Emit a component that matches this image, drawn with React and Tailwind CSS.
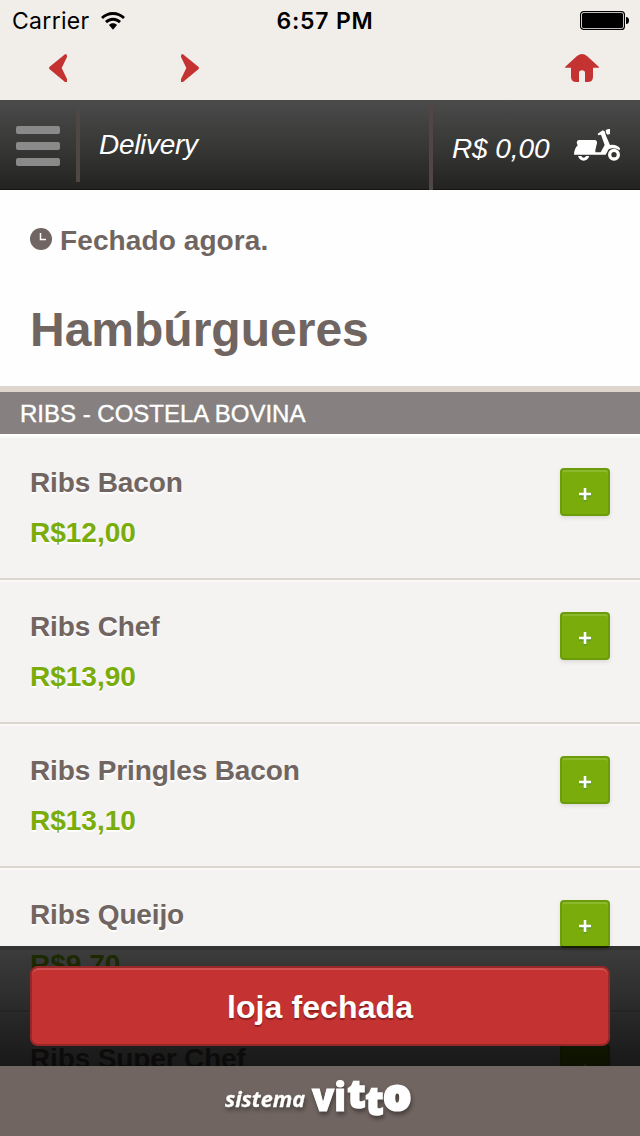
const items = [
  { name: 'Ribs Bacon', price: 'R$12,00' },
  { name: 'Ribs Chef', price: 'R$13,90' },
  { name: 'Ribs Pringles Bacon', price: 'R$13,10' },
  { name: 'Ribs Queijo', price: 'R$9,70' },
  { name: 'Ribs Super Chef', price: 'R$14,50' },
];

function StatusBar() {
  return (
    <div className="grid h-10 grid-cols-3 items-center font-[Inter,sans-serif] text-black">
      <div className="flex items-center gap-[11px] pl-3">
        <span className="pt-px text-[23px] leading-10 tracking-[0.3px]">Carrier</span>
        <svg className="h-[18px] w-[24px]" viewBox="0 0 72 54">
          <path d="M36 0C22 0 9 6 0 15l6 6c8-8 18-12 30-12s22 4 30 12l6-6C63 6 50 0 36 0Z" />
          <path d="M36 17c-10 0-18 4-24 10l6 7c5-5 11-8 18-8s13 3 18 8l6-7c-6-6-14-10-24-10Z" />
          <path d="M36 34c-5 0-9 2-12 5l12 14 12-14c-3-3-7-5-12-5Z" />
        </svg>
      </div>
      <div className="pt-px pl-[10px] text-center text-[23px] leading-10 font-semibold tracking-[0.8px] whitespace-nowrap">6:57 PM</div>
      <div className="flex justify-end pr-[11px]">
        <svg className="h-[19px] w-[49px]" viewBox="0 0 49 19">
          <rect x="0.6" y="0.6" width="43.8" height="17.8" rx="3" fill="#fff" stroke="#000" strokeWidth="1.2" />
          <rect x="2" y="2" width="41" height="15" rx="1.5" />
          <path d="M46 6q3 0 3 3.5T46 13Z" />
        </svg>
      </div>
    </div>
  );
}

function NavBar() {
  return (
    <div className="flex h-[60px] items-start pt-[14px] pr-[41px] pl-[49px] text-[#c53232]">
      <svg className="h-7 w-[18px]" viewBox="0 0 54 84" fill="currentColor">
        <path d="M49 0Q54 0 54 5V9L38 42 54 75V84H48L2 46Q-2 42 2 38Z" />
      </svg>
      <svg className="ml-[114px] h-7 w-[18px]" viewBox="0 0 54 84" fill="currentColor">
        <path d="M5 0Q0 0 0 5V9L16 42 0 75V84H6L52 46Q56 42 52 38Z" />
      </svg>
      <svg className="ml-auto h-7 w-[34px]" viewBox="0 0 102 84" fill="currentColor">
        <path d="M0 39L36 6Q51-6 66 6L102 39V41H84V68Q84 84 68 84H60V57Q60 49 51 49T42 57V84H34Q18 84 18 68V41H0Z" />
      </svg>
    </div>
  );
}

function Header() {
  return (
    <div className="flex h-[90px] border-b border-[#181212] bg-linear-to-b from-[#4b4b4b] via-[#383837] via-50% to-[#232322] text-[28px] text-white italic">
      <div className="flex w-[76px] flex-col gap-2 pt-[26px] pl-4">
        <div className="h-2 w-11 rounded-[2px] bg-[#8a8a8a]" />
        <div className="h-2 w-11 rounded-[2px] bg-[#8a8a8a]" />
        <div className="h-2 w-11 rounded-[2px] bg-[#8a8a8a]" />
      </div>
      <div className="mt-[10px] h-[72px] w-1 bg-[#4e4743]" />
      <div className="flex-1 pt-[25px] pl-[19px] leading-10 tracking-[-0.3px]">Delivery</div>
      <div className="h-[90px] w-1 bg-[#4e4743]" />
      <div className="flex w-[207px] pl-[19px]">
        <span className="w-[122px] pt-[29px] leading-10 tracking-[-0.1px] whitespace-nowrap">R$ 0,00</span>
        <svg className="mt-[29px] h-8 w-[46px]" viewBox="462 102 138 96" fill="#fff">
          <path d="M477 135H524Q532 136 531 144L526 166V172H542L554 150 543 119 535 121 533 116 548 106 554 109 558 122 570 150Q590 147 600 160L599 166Q588 158 575 160L566 163 557 179H462Q463 160 473 151L470 143Q470 136 477 135Z" />
          <path d="M557 105L565 102H570V117L563 119Q556 114 557 105Z" />
          <path d="M474 183H508Q503 197 491 197T474 183Z" />
          <circle cx="582" cy="179" r="13" fill="none" stroke="#fff" strokeWidth="10" />
          <path d="M484 183H498Q496 188 491 188T484 183Z" fill="#333" />
        </svg>
      </div>
    </div>
  );
}

function MenuItem({ name, price }) {
  return (
    <div className="flex h-36 shrink-0 justify-between border-t-2 border-b-2 border-t-[#f9f8f7] border-b-[#dbd6ce] px-[30px] font-bold [text-shadow:0_2px_0_#fff]">
      <div className="pt-[26px] text-[28px] whitespace-nowrap">
        <div className="h-[50px] leading-[38px] tracking-[-0.14px] text-[#706560]">{name}</div>
        <div className="leading-[38px] text-[#7aad0b]">{price}</div>
      </div>
      <button className="mt-[30px] h-12 w-[50px] rounded-[4px] border-2 border-[#6c9c0a] bg-[#7aad0b] shadow-[inset_0_2px_0_#8cb92e,0_2px_4px_#0000001a]">
        <svg className="mx-auto mt-[5px] h-[15px] w-3" viewBox="0 0 12 15">
          <path d="M0 8.500H12M6 2.500V14.500" stroke="#559536" strokeWidth="2.6" />
          <path d="M0 7H12M6 1V13" stroke="#fff" strokeWidth="2.6" />
        </svg>
      </button>
    </div>
  );
}

function Brand() {
  return (
    <svg className="mx-auto h-[70px] w-[640px] drop-shadow-[1px_3px_2px_#00000066]" viewBox="0 0 640 70" fill="#fff">
      <text x="225" y="41" fontFamily="Open Sans, sans-serif" fontSize="21.5" fontStyle="italic" fontWeight="700" stroke="#fff" strokeWidth="0.3" textLength="80" lengthAdjust="spacingAndGlyphs">sistema</text>
      <g fontFamily="Open Sans, sans-serif" fontWeight="800" stroke="#fff">
        <text x="312" y="44.500" fontSize="38" strokeWidth="1" textLength="34" lengthAdjust="spacingAndGlyphs">vi</text>
        <text x="347.500" y="41.500" fontSize="38" strokeWidth="1.6" textLength="18" lengthAdjust="spacingAndGlyphs">t</text>
        <text x="365.500" y="48.500" fontSize="38" strokeWidth="1.6" textLength="18" lengthAdjust="spacingAndGlyphs">t</text>
        <text x="383.500" y="44" fontSize="42" strokeWidth="3" textLength="27.500" lengthAdjust="spacingAndGlyphs">o</text>
      </g>
    </svg>
  );
}

export default function App() {
  return (
    <div className="relative flex h-[1136px] w-[640px] flex-col overflow-hidden bg-[#f4f3f2] font-['Liberation_Sans',sans-serif]">
      <div className="h-[100px] shrink-0 bg-[#f1eee9]">
        <StatusBar />
        <NavBar />
      </div>
      <Header />
      <div className="h-[202px] shrink-0 border-b-[6px] border-[#ded6cc] bg-[#fefefe] px-[30px] font-bold text-[#706560]">
        <div className="flex pt-[31px] text-[28px] leading-10">
          <svg className="mt-[7px] mr-2 h-[22px] w-[22px]" viewBox="0 0 22 22">
            <circle cx="11" cy="11" r="11" fill="#706560" />
            <path d="M10.500 5V11.500H16" fill="none" stroke="#fff" strokeWidth="1.500" />
          </svg>
          <span className="tracking-[0.1px]">Fechado agora.</span>
        </div>
        <h1 className="mt-[39px] text-[48px] leading-[60px]">Hambúrgueres</h1>
      </div>
      <div className="h-[42px] shrink-0 bg-[#868180] pl-5 text-[24px] leading-[43px] text-white [-webkit-text-stroke:0.4px_white]">RIBS - COSTELA BOVINA</div>
      <div className="flex h-[702px] flex-col overflow-hidden border-t-2 border-white">
        {items.map((item) => (
          <MenuItem key={item.name} {...item} />
        ))}
      </div>
      <div className="absolute inset-x-0 bottom-0">
        <div className="h-[120px] bg-linear-to-b from-black/75 to-black/90 px-[30px] pt-5 shadow-[inset_0_4px_0_#00000028]">
          <button className="h-20 w-full rounded-[8px] border-2 border-[#982727] bg-[#c53232] pt-[2px] text-[32px] font-bold tracking-[0.1px] text-white shadow-[inset_0_2px_0_#d05152] [text-shadow:0_2px_1px_#8b2020]">loja fechada</button>
        </div>
        <div className="h-[70px] bg-[#706560]">
          <Brand />
        </div>
      </div>
    </div>
  );
}
